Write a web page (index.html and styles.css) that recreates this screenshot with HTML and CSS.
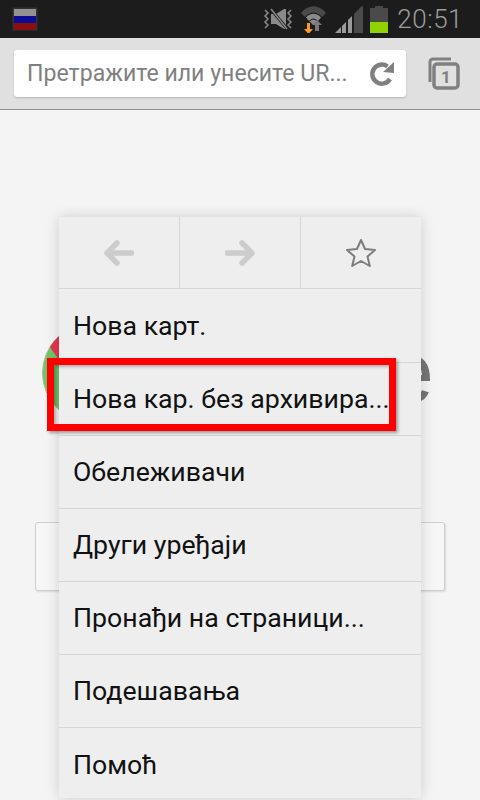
FILE: index.html
```html
<!DOCTYPE html>
<html lang="en">
<head>
    <meta charset="UTF-8">
    <meta name="viewport" content="width=device-width, initial-scale=1.0">
    <title>Menu</title>
    <link rel="stylesheet" href="styles.css">
</head>
<body>
    <div class="status-bar">
        <svg class="flag" width="26" height="24" viewBox="0 0 26 24">
            <rect x="0.5" y="0.5" width="25" height="23" fill="#333"/>
            <rect x="2" y="2" width="22" height="7" fill="#929292"/>
            <rect x="2" y="9" width="22" height="7" fill="#0b0b96"/>
            <rect x="2" y="16" width="22" height="7" fill="#8a1010"/>
        </svg>
        <div class="status-icons">
            <svg class="mute" width="32" height="22" viewBox="0 0 32 22">
                <path d="M9 6h5l8-5h2v20h-2l-8-5H9z" fill="#8a8a8a"/>
                <path d="M8 0L26 22" stroke="#1c1c1c" stroke-width="3"/>
                <path d="M9 1L25 21" stroke="#8a8a8a" stroke-width="1.500"/>
                <path d="M3 2l3 3-3 3 3 3-3 3 3 3-3 3M29 2l-3 3 3 3-3 3 3 3-3 3 3 3" fill="none" stroke="#8a8a8a" stroke-width="1.500"/>
            </svg>
            <svg class="wifi" width="25" height="27" viewBox="0 0 25 27">
                <path d="M0 7C7 -2 18 -2 25 7L21 11C16 5 9 5 4 11z" fill="#4a4a4a"/>
                <path d="M5 11.500C9 6.500 16 6.500 20 11.500L17 15C14 11.500 11 11.500 8 15z" fill="#8a8a8a"/>
                <path d="M8.500 15.500C11 13 14 13 16.500 15.500L12.500 19z" fill="#8a8a8a"/>
                <path d="M6 17h3v6h3l-4.500 5-4.500-5h3z" fill="#f59a23"/>
                <path d="M14 25v-6h-3l5-5 5 5h-3v6z" fill="#7a7a7a"/>
            </svg>
            <svg class="signal" width="28" height="27" viewBox="0 0 28 27">
                <path d="M0 27L6 21V27z" fill="#9a9a9a"/>
                <path d="M7 20L11 16V27H7z" fill="#9a9a9a"/>
                <path d="M13 14L17 10V27H13z" fill="#9a9a9a"/>
                <path d="M19 8L27 0H28V27H19z" fill="#4a4a4a"/>
            </svg>
            <svg class="battery" width="18" height="27" viewBox="0 0 18 27">
                <path d="M5 0h8v2h5v14H0V2h5z" fill="#4a4a4a"/>
                <rect y="16" width="18" height="11" fill="#8fd400"/>
            </svg>
            <span class="clock">20:51</span>
        </div>
    </div>

    <div class="toolbar">
        <div class="omnibox">
            <span class="omnibox-text">Претражите или унесите UR...</span>
            <svg width="28" height="28" viewBox="0 0 28 28">
                <path d="M22 19A9.500 9.500 0 1 1 19.500 6.500" fill="none" stroke="#808080" stroke-width="4.500"/>
                <path d="M15 12L26 2V13z" fill="#808080"/>
            </svg>
        </div>
        <svg class="tabs-btn" width="34" height="34" viewBox="0 0 34 34">
            <path d="M3 25V5a3 3 0 0 1 3-3h18" fill="none" stroke="#808080" stroke-width="3"/>
            <rect x="7" y="7" width="24" height="24" rx="3" fill="#e0e0e0" stroke="#808080" stroke-width="3.500"/>
            <text class="tabs-count" x="19" y="26" text-anchor="middle">1</text>
        </svg>
    </div>

    <div class="page">
        <svg class="logo" width="100" height="100" viewBox="0 0 100 100">
            <circle cx="50" cy="50" r="49.500" fill="#72c468" stroke="#9cc795"/>
            <path d="M8 24L17 37L50 50V0.500A49.500 49.500 0 0 0 8 24z" fill="#e8344f"/>
        </svg>
        <span class="logo-letter">e</span>
        <div class="search-box"></div>
    </div>

    <div class="menu">
        <div class="menu-nav">
            <div class="nav-btn">
                <svg width="30" height="26" viewBox="0 0 30 26"><path d="M13 3L3 13l10 10M4 13h24" fill="none" stroke="#cccccc" stroke-width="5.500" stroke-linecap="round" stroke-linejoin="round"/></svg>
            </div>
            <div class="nav-btn">
                <svg width="30" height="26" viewBox="0 0 30 26"><path d="M17 3l10 10-10 10M26 13H2" fill="none" stroke="#cccccc" stroke-width="5.500" stroke-linecap="round" stroke-linejoin="round"/></svg>
            </div>
            <div class="nav-btn">
                <svg width="30" height="30" viewBox="0 0 30 30"><path d="M15 2l4 9 10 1-7.500 6.500 2.300 9.500L15 23l-8.800 5 2.300-9.500L1 12l10-1z" fill="none" stroke="#7d7d7d" stroke-width="2" stroke-linejoin="round"/></svg>
            </div>
        </div>
        <div class="menu-item menu-item-first">Нова карт.</div>
        <div class="menu-item">Нова кар. без архивира...</div>
        <div class="menu-item">Обележивачи</div>
        <div class="menu-item">Други уређаји</div>
        <div class="menu-item">Пронађи на страници...</div>
        <div class="menu-item">Подешавања</div>
        <div class="menu-item">Помоћ</div>
    </div>

    <div class="highlight"></div>
</body>
</html>
```

FILE: styles.css
```css
html, body {
    margin: 0;
    padding: 0;
}
body {
    position: relative;
    width: 480px;
    height: 800px;
    overflow: hidden;
    display: flex;
    flex-direction: column;
    font-family: Roboto, sans-serif;
    background-color: #f4f4f4;
}
.status-bar {
    height: 38px;
    flex: none;
    display: flex;
    align-items: center;
    justify-content: space-between;
    padding: 0 17px 0 12px;
    background-color: #1c1c1c;
}
.flag {
    display: block;
    margin-top: -1px;
}
.status-icons {
    display: flex;
    align-items: center;
}
.status-icons svg {
    display: block;
}
.mute {
    margin-right: 7px;
}
.wifi {
    margin-right: 9px;
}
.signal {
    margin-right: 7px;
}
.battery {
    margin-right: 9px;
}
.clock {
    font-size: 26px;
    font-weight: 300;
    letter-spacing: 0.5px;
    color: #9c9c9c;
}
.toolbar {
    height: 72px;
    flex: none;
    box-sizing: border-box;
    display: flex;
    align-items: center;
    padding: 0 19px 0 14px;
    background-color: #e0e0e0;
    border-bottom: 1px solid #8f8f8f;
}
.omnibox {
    width: 392px;
    height: 47px;
    box-sizing: border-box;
    display: flex;
    align-items: center;
    justify-content: space-between;
    padding: 0 10px 0 13px;
    background-color: white;
    border-radius: 3px;
    box-shadow: 0 1px 2px rgba(0,0,0,0.2);
}
.omnibox-text {
    font-size: 23.1px;
    color: #808080;
    white-space: nowrap;
}
.tabs-btn {
    margin-left: auto;
}
.tabs-count {
    font-family: Roboto, sans-serif;
    font-size: 17px;
    font-weight: 700;
    fill: #808080;
}
.page {
    flex: 1;
    position: relative;
}
.logo {
    position: absolute;
    left: 42px;
    top: 213px;
}
.logo-letter {
    position: absolute;
    left: 385px;
    top: 218px;
    font-family: "Liberation Sans", sans-serif;
    font-size: 88px;
    line-height: 88px;
    color: #757575;
}
.search-box {
    position: absolute;
    left: 35px;
    top: 412px;
    width: 410px;
    height: 69px;
    box-sizing: border-box;
    background-color: #f6f6f6;
    border: 1px solid #cfcfcf;
    border-radius: 3px;
    box-shadow: 1px 1px 2px rgba(0,0,0,0.12);
}
.menu {
    position: absolute;
    left: 59px;
    top: 217px;
    width: 362px;
    height: 581px;
    display: flex;
    flex-direction: column;
    background-color: #eeeeee;
    border-radius: 2px;
    box-shadow: 0 0 14px rgba(0,0,0,0.16);
}
.menu-nav {
    height: 72px;
    flex: none;
    box-sizing: border-box;
    display: flex;
    border-bottom: 1px solid #d6d6d6;
}
.nav-btn {
    flex: 1;
    display: flex;
    align-items: center;
    justify-content: center;
    border-left: 1px solid #d6d6d6;
}
.nav-btn:first-child {
    border-left: none;
}
.menu-item {
    height: 73px;
    flex: none;
    box-sizing: border-box;
    display: flex;
    align-items: center;
    padding-left: 14px;
    font-size: 26.7px;
    color: #111111;
    white-space: nowrap;
    border-bottom: 1px solid #d6d6d6;
}
.menu-item-first {
    height: 74px;
}
.menu-item:last-child {
    border-bottom: none;
}
.highlight {
    position: absolute;
    left: 47px;
    top: 358px;
    width: 349px;
    height: 73px;
    box-sizing: border-box;
    border: 7px solid #ff0000;
    box-shadow: 2px 2px 3px rgba(0,0,0,0.35), inset 2px 2px 3px rgba(0,0,0,0.25);
}
```
